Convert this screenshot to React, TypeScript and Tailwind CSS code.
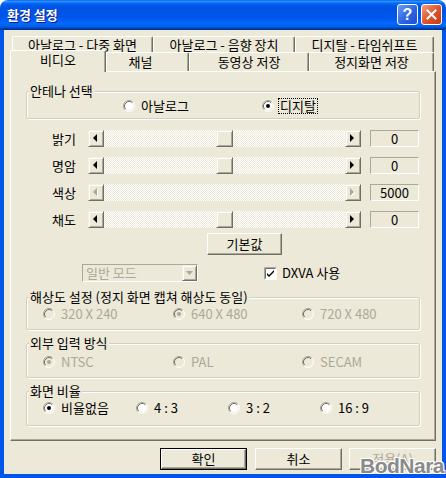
import React from 'react';

const font = "font-['Noto_Sans_CJK_KR','Liberation_Sans',sans-serif]";

// classic 3D bevel helpers
const raised =
  'border border-t-white border-l-white border-r-[#716F64] border-b-[#716F64] shadow-[inset_-1px_-1px_0_#ACA899]';
const scrollBtn =
  'border border-t-[#F1EFE2] border-l-[#F1EFE2] border-r-[#716F64] border-b-[#716F64] shadow-[inset_1px_1px_0_#ffffff,inset_-1px_-1px_0_#ACA899]';

function Radio({
  label,
  checked = false,
  disabled = false,
  focus = false,
  className = '',
}: {
  label: string;
  checked?: boolean;
  disabled?: boolean;
  focus?: boolean;
  className?: string;
}) {
  return (
    <div className={`flex items-center gap-[4px] ${className}`}>
      <svg width="12" height="12" viewBox="0 0 12 12" className="shrink-0">
        <circle cx="6" cy="6" r="5" fill={disabled ? '#ECE9D8' : '#ffffff'} />
        <path d="M2.11 9.89A5.5 5.5 0 0 1 9.89 2.11" stroke="#ACA899" fill="none" />
        <path d="M2.82 9.18A4.5 4.5 0 0 1 9.18 2.82" stroke="#716F64" fill="none" />
        <path d="M9.89 2.11A5.5 5.5 0 0 1 2.11 9.89" stroke="#ffffff" fill="none" />
        <path d="M9.18 2.82A4.5 4.5 0 0 1 2.82 9.18" stroke="#F1EFE2" fill="none" />
        {checked && <circle cx="6" cy="6" r="2" fill={disabled ? '#ACA899' : '#000000'} />}
      </svg>
      <span
        className={`leading-[14px] px-[1px] whitespace-nowrap ${disabled ? 'text-[#ACA899]' : 'text-black'} ${
          focus ? 'border border-dotted border-black' : 'border border-transparent'
        }`}
      >
        {label}
      </span>
    </div>
  );
}

function Arrow({ dir, disabled }: { dir: 'l' | 'r'; disabled?: boolean }) {
  const pts = dir === 'l' ? '4,0 4,8 0,4' : '0,0 0,8 4,4';
  return (
    <div className={`w-[16px] h-[17px] flex items-center justify-center bg-[#ECE9D8] ${scrollBtn}`}>
      <svg width="6" height="9" viewBox="0 0 6 9">
        {disabled && <polygon points={pts} fill="#ffffff" transform="translate(1 1)" />}
        <polygon points={pts} fill={disabled ? '#ACA899' : '#000000'} />
      </svg>
    </div>
  );
}

function Slider({ label, value, disabled }: { label: string; value: string; disabled?: boolean }) {
  return (
    <div className="flex items-center h-[17px]">
      <div className="w-[65px] text-right leading-[14px]">{label}</div>
      <div className="ml-[12px]">
        <Arrow dir="l" disabled={disabled} />
      </div>
      <div className="w-[241px] h-[17px] flex bg-[repeating-conic-gradient(#ffffff_0%_25%,#ECE9D8_0%_50%)] bg-[length:2px_2px]">
        {!disabled && <div className={`ml-[112px] w-[17px] h-[17px] bg-[#ECE9D8] ${scrollBtn}`} />}
      </div>
      <Arrow dir="r" disabled={disabled} />
      <div className="ml-[9px] w-[49px] h-[17px] flex items-center justify-center leading-[14px] border border-t-[#ACA899] border-l-[#ACA899] border-r-white border-b-white">
        {value}
      </div>
    </div>
  );
}

function Group({
  title,
  className = '',
  children,
}: {
  title: string;
  className?: string;
  children: React.ReactNode;
}) {
  return (
    <fieldset
      className={`ml-[15px] w-[394px] border border-[#D0D0BF] rounded-[2px] shadow-[1px_1px_0_#ffffff,inset_1px_1px_0_#ffffff] ${className}`}
    >
      <legend className="ml-[2px] px-[1px] leading-[14px] bg-[#ECE9D8]">{title}</legend>
      {children}
    </fieldset>
  );
}

function Button({
  label,
  def,
  disabled,
  className = '',
}: {
  label: React.ReactNode;
  def?: boolean;
  disabled?: boolean;
  className?: string;
}) {
  const inner = (
    <div
      className={`w-full h-full flex items-center justify-center leading-[14px] bg-[#ECE9D8] ${raised} ${
        disabled ? 'text-[#ACA899]' : 'text-black'
      }`}
    >
      {label}
    </div>
  );
  if (def) {
    return <div className={`border border-black ${className}`}>{inner}</div>;
  }
  return <div className={className}>{inner}</div>;
}

function Tab({
  label,
  w,
  h,
  selected,
  extra = '',
}: {
  label: string;
  w: string;
  h: string;
  selected?: boolean;
  extra?: string;
}) {
  return (
    <div
      className={`${w} ${h} ${extra} flex items-center justify-center bg-[#ECE9D8] rounded-t-[2px] border-t border-l border-r border-t-white border-l-white border-r-[#716F64] shadow-[inset_-1px_0_0_#ACA899] leading-[14px] whitespace-nowrap ${
        selected ? 'relative z-10 -mt-[2px] pb-[3px]' : ''
      }`}
    >
      {label}
    </div>
  );
}

export default function App() {
  return (
    <div className={`${font} text-[13px] text-black w-[446px] h-[478px] relative flex flex-col bg-white`}>
      {/* Title bar */}
      <div className="h-[30px] shrink-0 rounded-t-[8px] flex items-center pl-[7px] pr-[4px] bg-[linear-gradient(to_bottom,#0058ee_0%,#3593ff_4%,#288eff_6%,#127dff_8%,#036ffc_10%,#0262ee_14%,#0057e5_20%,#0054e3_24%,#0055eb_56%,#005bf5_66%,#026afe_76%,#0062ef_86%,#0052d6_92%,#0040ab_94%,#003092_100%)]">
        <span className="text-white font-bold text-[13px] leading-[16px] [text-shadow:1px_1px_0_#0A1883]">
          환경 설정
        </span>
        <div className="ml-auto flex gap-[3px] -mt-[1px]">
          <div className="w-[21px] h-[21px] rounded-[3px] border border-white bg-[linear-gradient(135deg,#6C9CF6_0%,#2A64E8_55%,#1B4FD0_100%)] flex items-center justify-center">
            <span className="text-white font-bold text-[16px] leading-[16px] font-['Liberation_Sans',sans-serif]">?</span>
          </div>
          <div className="w-[21px] h-[21px] rounded-[3px] border border-white bg-[linear-gradient(135deg,#F0A184_0%,#E1542C_50%,#C63A14_100%)] flex items-center justify-center">
            <svg width="11" height="11" viewBox="0 0 11 11">
              <path d="M1.5 1.5L9.5 9.5M9.5 1.5L1.5 9.5" stroke="#ffffff" strokeWidth="2" strokeLinecap="square" />
            </svg>
          </div>
        </div>
      </div>

      {/* Client area */}
      <div className="flex-1 bg-[#ECE9D8] border-x-4 border-b-4 border-[#0055EA] flex flex-col pl-[6px]">
        {/* Tab strip */}
        <div className="mt-[6px] flex h-[16px] ml-[2px]">
          <Tab label="아날로그 - 다중 화면" w="w-[141px]" h="h-[16px]" />
          <Tab label="아날로그 - 음향 장치" w="w-[142px]" h="h-[16px]" />
          <Tab label="디지탈 - 타임쉬프트" w="w-[139px]" h="h-[16px]" />
        </div>
        <div className="flex h-[19px] items-start">
          <Tab label="비디오" w="w-[96px]" h="h-[22px]" selected />
          <Tab label="채널" w="w-[83px]" h="h-[19px]" extra="pr-[14px]" />
          <Tab label="동영상 저장" w="w-[120px]" h="h-[19px]" />
          <Tab label="정지화면 저장" w="w-[125px]" h="h-[19px]" />
        </div>

        {/* Panel */}
        <div className={`w-[426px] h-[370px] flex flex-col ${raised}`}>
          <Group title="안테나 선택" className="mt-[12px]">
            <div className="flex h-[16px] mb-[4px] pl-[96px] items-center">
              <Radio label="아날로그" className="w-[139px]" />
              <Radio label="디지탈" checked focus />
            </div>
          </Group>

          <div className="mt-[11px] flex flex-col gap-[10px]">
            <Slider label="밝기" value="0" />
            <Slider label="명암" value="0" />
            <Slider label="색상" value="5000" disabled />
            <Slider label="채도" value="0" />
          </div>

          <Button label="기본값" className="ml-[196px] mt-[5px] w-[75px] h-[22px]" />

          <div className="mt-[9px] flex items-center h-[18px]">
            <div className="ml-[71px] w-[116px] h-[18px] flex items-center border border-t-[#ACA899] border-l-[#ACA899] border-r-white border-b-white">
              <span className="flex-1 pl-[3px] text-[#ACA899] leading-[14px]">일반 모드</span>
              <div className={`w-[15px] h-[16px] flex items-center justify-center bg-[#ECE9D8] ${scrollBtn}`}>
                <svg width="7" height="4" viewBox="0 0 7 4">
                  <polygon points="0,0 7,0 3.5,4" fill="#ACA899" />
                </svg>
              </div>
            </div>
            <svg width="13" height="13" viewBox="0 0 13 13" className="ml-[66px]">
              <rect x="0" y="0" width="13" height="13" fill="#ffffff" />
              <path d="M0.5 12.5V0.5H12.5" stroke="#ACA899" fill="none" />
              <path d="M1.5 11.5V1.5H11.5" stroke="#716F64" fill="none" />
              <path d="M3 6l2 2 5-5v2l-5 5-2-2z" fill="#000000" />
            </svg>
            <span className="ml-[5px] leading-[14px]">DXVA 사용</span>
          </div>

          <Group title="해상도 설정 (정지 화면 캡쳐 해상도 동일)" className="mt-[8px]">
            <div className="flex h-[16px] mt-[2px] mb-[7px] pl-[16px] items-center">
              <Radio label="320 X 240" disabled className="w-[130px]" />
              <Radio label="640 X 480" disabled checked className="w-[129px]" />
              <Radio label="720 X 480" disabled />
            </div>
          </Group>

          <Group title="외부 입력 방식" className="mt-[6px]">
            <div className="flex h-[16px] mt-[4px] mb-[7px] pl-[16px] items-center">
              <Radio label="NTSC" disabled checked className="w-[130px]" />
              <Radio label="PAL" disabled className="w-[129px]" />
              <Radio label="SECAM" disabled />
            </div>
          </Group>

          <Group title="화면 비율" className="mt-[6px]">
            <div className="flex h-[16px] mt-[2px] mb-[9px] pl-[16px] items-center">
              <Radio label="비율없음" checked className="w-[93px]" />
              <Radio label="4 : 3" className="w-[92px]" />
              <Radio label="3 : 2" className="w-[92px]" />
              <Radio label="16 : 9" />
            </div>
          </Group>
        </div>

        {/* Dialog buttons */}
        <div className="mt-[7px] flex justify-end pr-[6px] gap-[7px]">
          <Button label="확인" def className="w-[87px] h-[22px] mr-[1px]" />
          <Button label="취소" className="w-[87px] h-[22px]" />
          <Button
            label={
              <span>
                적용(<span className="underline">A</span>)
              </span>
            }
            disabled
            className="w-[87px] h-[22px]"
          />
        </div>
      </div>

      {/* watermark */}
      <div className="absolute right-[2px] bottom-[-3px] text-[21px] font-black tracking-[-0.5px] text-[#8A8A8A] font-['Liberation_Sans',sans-serif] [text-shadow:1px_1px_0_#fff,-1px_-1px_0_#fff,1px_-1px_0_#fff,-1px_1px_0_#fff]">
        BodNara
      </div>
    </div>
  );
}
